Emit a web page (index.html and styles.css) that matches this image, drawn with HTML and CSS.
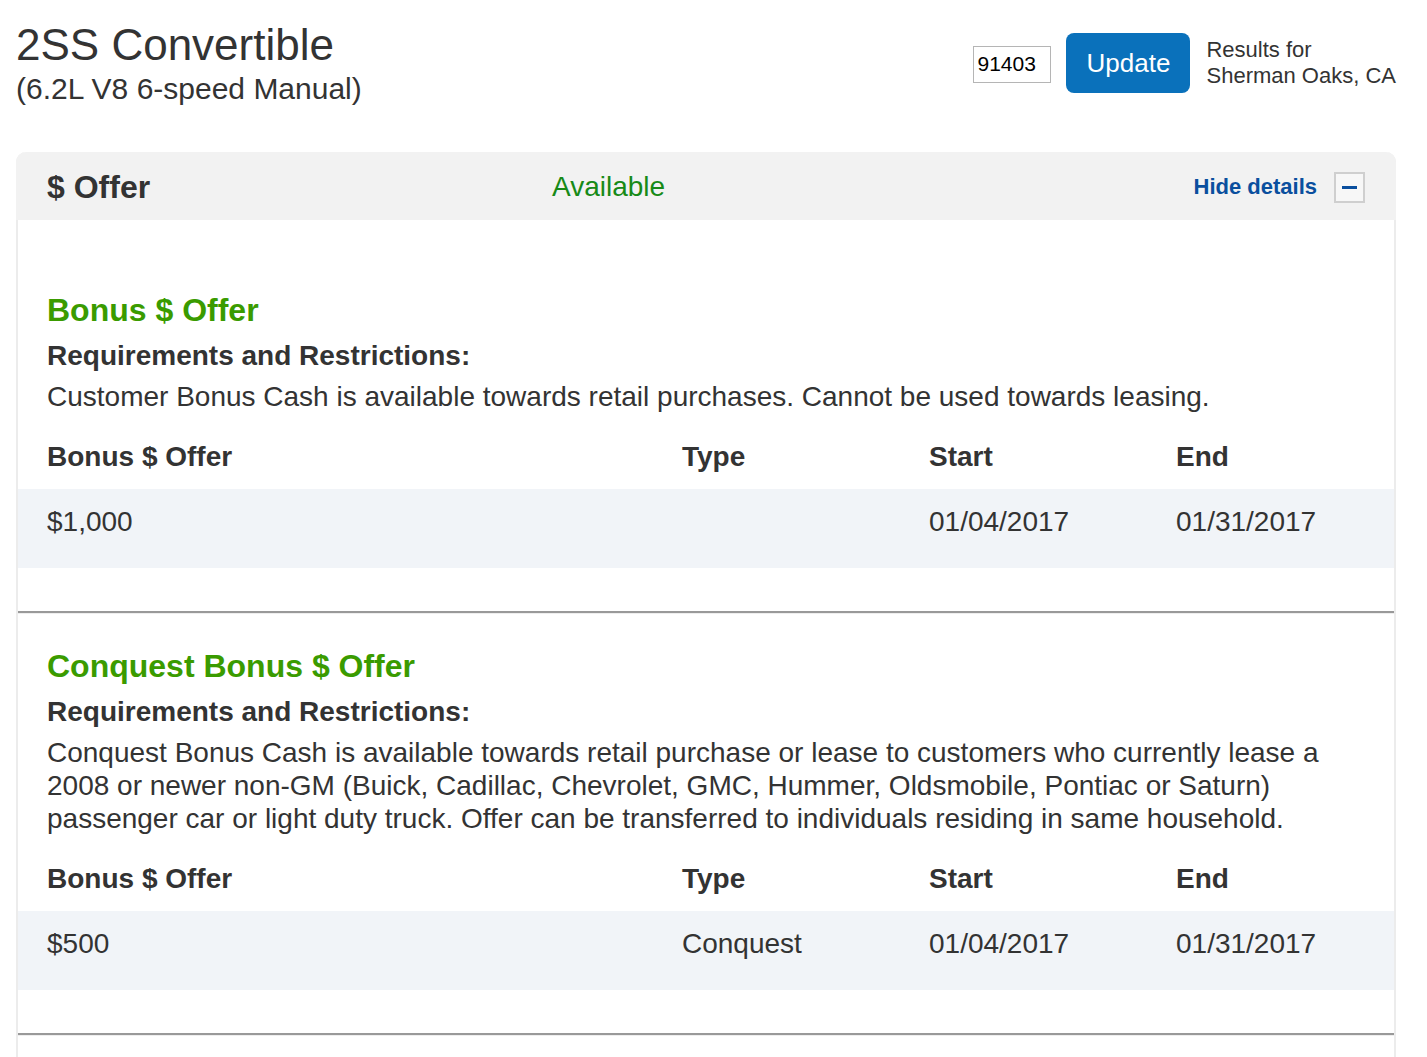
FILE: index.html
```html
<!DOCTYPE html>
<html lang="en">
<head>
  <meta charset="UTF-8">
  <title>2SS Convertible - Offers</title>
  <link rel="stylesheet" href="styles.css">
</head>
<body>
  <div class="page">
    <header class="top">
      <div class="vehicle">
        <h1>2SS Convertible</h1>
        <p class="trim">(6.2L V8 6-speed Manual)</p>
      </div>
      <div class="zip">
        <input type="text" class="zip-input" value="91403">
        <button type="button" class="btn-update">Update</button>
        <div class="results">Results for<br>Sherman Oaks, CA</div>
      </div>
    </header>

    <div class="panel">
      <div class="panel-head">
        <h2>$ Offer</h2>
        <span class="status">Available</span>
        <a class="toggle">Hide details</a>
        <span class="toggle-box"><span class="minus"></span></span>
      </div>

      <div class="panel-body">
        <div class="offer">
          <h3>Bonus $ Offer</h3>
          <h4>Requirements and Restrictions:</h4>
          <p>Customer Bonus Cash is available towards retail purchases. Cannot be used towards leasing.</p>
          <div class="tbl">
            <div class="tr th">
              <span>Bonus $ Offer</span><span>Type</span><span>Start</span><span>End</span>
            </div>
            <div class="tr td">
              <span>$1,000</span><span></span><span>01/04/2017</span><span>01/31/2017</span>
            </div>
          </div>
        </div>
        <hr>

        <div class="offer">
          <h3>Conquest Bonus $ Offer</h3>
          <h4>Requirements and Restrictions:</h4>
          <p>Conquest Bonus Cash is available towards retail purchase or lease to customers who currently lease a 2008 or newer non-GM (Buick, Cadillac, Chevrolet, GMC, Hummer, Oldsmobile, Pontiac or Saturn) passenger car or light duty truck. Offer can be transferred to individuals residing in same household.</p>
          <div class="tbl">
            <div class="tr th">
              <span>Bonus $ Offer</span><span>Type</span><span>Start</span><span>End</span>
            </div>
            <div class="tr td">
              <span>$500</span><span>Conquest</span><span>01/04/2017</span><span>01/31/2017</span>
            </div>
          </div>
        </div>
        <hr>
      </div>
    </div>
  </div>
</body>
</html>
```

FILE: styles.css
```css
body {
  margin: 0;
  font-family: "Liberation Sans", Arial, sans-serif;
  color: #333;
  background: #fff;
}

.page {
  width: 1380px;
  margin-left: 16px;
  padding-top: 20px;
}

.top {
  display: flex;
  justify-content: space-between;
  align-items: center;
}

h1 {
  margin: 0;
  font-size: 44px;
  line-height: 50px;
  font-weight: normal;
}

.trim {
  margin: 1px 0 0;
  font-size: 30px;
  line-height: 35px;
}

.zip {
  display: flex;
  align-items: center;
}

.zip-input {
  box-sizing: border-box;
  width: 78px;
  height: 37px;
  padding: 0 3px;
  margin: 2px 0 0;
  border: 1px solid #b5b5b5;
  font-family: "Liberation Sans", Arial, sans-serif;
  font-size: 21px;
  color: #000;
}

.btn-update {
  width: 124px;
  height: 60px;
  margin: 0 16px 0 15px;
  border: 0;
  border-radius: 8px;
  background: #0a71bb;
  color: #fff;
  font-family: "Liberation Sans", Arial, sans-serif;
  font-size: 26px;
}

.results {
  font-size: 22px;
  line-height: 26px;
}

.panel {
  margin-top: 46px;
  border: 2px solid #ececec;
  border-top: 0;
  border-radius: 10px 10px 0 0;
}

.panel-head {
  display: flex;
  align-items: center;
  height: 68px;
  margin: 0 -2px;
  padding: 2px 31px 0;
  background: #f2f2f2;
  border-radius: 10px 10px 0 0;
  box-sizing: border-box;
}

.panel-head h2 {
  width: 505px;
  margin: 0;
  font-size: 32px;
}

.status {
  flex: 1;
  color: #178a17;
  font-size: 28px;
}

.toggle {
  color: #0a4f9e;
  font-size: 22px;
  font-weight: bold;
  cursor: pointer;
}

.toggle-box {
  box-sizing: border-box;
  display: flex;
  align-items: center;
  justify-content: center;
  width: 31px;
  height: 31px;
  margin-left: 17px;
  border: 2px solid #cfcfcf;
  background: #f7f7f7;
}

.minus {
  width: 15px;
  height: 3px;
  background: #0a4f9e;
}

.panel-body {
  padding: 38px 0 40px;
}

.offer {
  padding: 32px 0 43px;
}

.offer h3 {
  margin: 0;
  padding: 0 29px;
  color: #3a9b00;
  font-size: 32px;
  line-height: 40px;
}

.offer h4 {
  margin: 9px 0 0;
  padding: 0 29px;
  font-size: 28px;
  line-height: 33px;
}

.offer p {
  margin: 8px 0 0;
  padding: 0 29px;
  font-size: 28px;
  line-height: 33px;
}

.tbl {
  margin-top: 11px;
  font-size: 28px;
  line-height: 33px;
}

.tr {
  display: grid;
  grid-template-columns: 635px 247px 247px 1fr;
  padding: 16px 29px;
}

.th {
  font-weight: bold;
}

.td {
  padding-bottom: 30px;
  background: #f1f4f8;
}

hr {
  margin: 0;
  height: 0;
  border: 0;
  border-top: 2px solid #999;
  border-bottom: 1px solid #eee;
}
```
